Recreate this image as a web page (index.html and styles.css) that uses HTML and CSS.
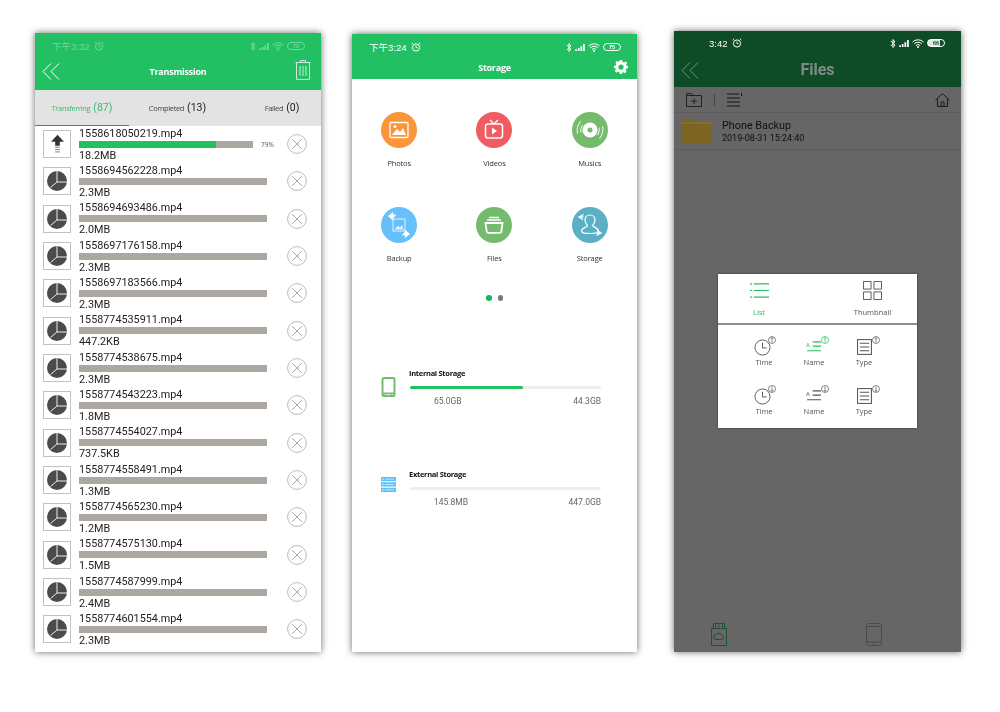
FILE: index.html
```html
<!DOCTYPE html>
<html lang="en">

<head>
	<meta charset="UTF-8">
	<meta name="viewport" content="width=device-width, initial-scale=1.0">
	<title>Storage app screens</title>
	<link rel="stylesheet" href="styles.css">
</head>

<body>
	<svg class="defs" xmlns="http://www.w3.org/2000/svg">
		<symbol id="i-back" viewBox="0 0 18 17"><path d="M9 .5 1 8.5l8 8M17 .5 9 8.5l8 8" fill="none" stroke="currentColor" stroke-width="1"/></symbol>
		<symbol id="i-alarm" viewBox="0 0 10 10"><circle cx="5" cy="5.5" r="3.6" fill="none" stroke="currentColor"/><path d="M5 3.5v2.2h1.6M.6 2.2 2.2.8M9.4 2.2 7.8.8" fill="none" stroke="currentColor" stroke-width=".9"/></symbol>
		<symbol id="i-bt" viewBox="0 0 6 11"><path d="M.8 3 4.800 7 3 9.500v-8L4.800 4 .8 8" fill="none" stroke="currentColor"/></symbol>
		<symbol id="i-signal" viewBox="0 0 11 8"><path d="M0 6h2v2H0zM3 4.500h2V8H3zM6 2.500h2V8H6zM9 0h2v8H9z" fill="currentColor"/></symbol>
		<symbol id="i-wifi" viewBox="0 0 12 9"><path d="M.5 3a8 8 0 0 1 11 0M2.200 4.800a5.500 5.500 0 0 1 7.600 0M3.900 6.500a3 3 0 0 1 4.200 0" fill="none" stroke="currentColor"/><circle cx="6" cy="8" r="1" fill="currentColor"/></symbol>
		<symbol id="i-pie" viewBox="0 0 20 20"><circle cx="10" cy="10" r="10" fill="#4b4b4b"/><path d="M10 0v11H20M10 11 3.500 16.500" fill="none" stroke="#fff" stroke-width=".9"/></symbol>
		<symbol id="i-up" viewBox="0 0 14 20"><path d="M7 0 14 7.500H9.500V12h-5V7.500H0z" fill="#333"/><path d="M4.500 13.500h5M4.500 16h5M4.500 18.500h5" stroke="#777" fill="none"/></symbol>
		<symbol id="i-close" viewBox="0 0 20 20"><circle cx="10" cy="10" r="9.400" fill="none" stroke="#a9a9a9" stroke-width=".8"/><path d="m5 5 10 10M15 5 5 15" stroke="#a9a9a9" fill="none"/></symbol>
		<symbol id="i-clock" viewBox="0 0 18 18"><circle cx="9" cy="9" r="8" fill="none" stroke="#555"/><path d="M9 4v5.500h4.500" fill="none" stroke="#555"/></symbol>
		<symbol id="i-type" viewBox="0 0 16 17"><rect x=".6" y=".6" width="14.800" height="15.800" fill="none" stroke="#555" stroke-width="1.100"/><path d="M3 4.500h10M3 8.500h10M3 12.500h10" stroke="#555" stroke-width="1.200"/></symbol>
		<symbol id="i-name" viewBox="0 0 18 14"><path d="M7 1h9M7 5.500h9M1 10.500h15" stroke="currentColor" stroke-width="1.200"/></symbol>
		<symbol id="i-sortup" viewBox="0 0 8 8"><circle cx="4" cy="4" r="3.500" fill="none" stroke="currentColor" stroke-width=".7"/><path d="M4 6.500v-5M2.800 2.800 4 1.500l1.200 1.300" fill="none" stroke="currentColor" stroke-width=".7"/></symbol>
		<symbol id="i-sortdown" viewBox="0 0 8 8"><circle cx="4" cy="4" r="3.500" fill="none" stroke="currentColor" stroke-width=".7"/><path d="M4 1.500v5M2.800 5.200 4 6.500l1.200-1.300" fill="none" stroke="currentColor" stroke-width=".7"/></symbol>
	</svg>

	<main class="board">
		<!-- transfer list -->
		<section class="phone phone-transfer">
			<header class="bar bar-tall">
				<div class="status status-faint">
					<span class="clock">下午3:32</span>
					<svg class="ic-alarm"><use href="#i-alarm"/></svg>
					<span class="status-right">
						<svg class="ic-bt"><use href="#i-bt"/></svg>
						<svg class="ic-signal"><use href="#i-signal"/></svg>
						<svg class="ic-wifi"><use href="#i-wifi"/></svg>
						<span class="battery">70</span>
					</span>
				</div>
				<div class="title-row">
					<svg class="ic-back"><use href="#i-back"/></svg>
					<h1 class="title">Transmission</h1>
					<svg class="ic-trash" viewBox="0 0 16 20"><path d="M5.500 2V.6h5V2M.6 2.500h14.800M1.500 2.500v16.900h13V2.500M5 6v10M8 6v10M11 6v10" fill="none" stroke="currentColor"/></svg>
				</div>
			</header>
			<nav class="tabs">
				<div class="tab tab-active">Transferring <b>(87)</b></div>
				<div class="tab">Completed <b>(13)</b></div>
				<div class="tab tab-last">Failed <b>(0)</b></div>
			</nav>
			<div class="list">
				<div class="row row-up">
					<div class="thumb"><svg class="ic-up"><use href="#i-up"/></svg></div>
					<div class="info">
						<div class="name">1558618050219.mp4</div>
						<div class="track-line">
							<div class="track track-short"><div class="fill fill-79"></div></div>
							<span class="pct">79%</span>
						</div>
						<div class="size">18.2MB</div>
					</div>
					<svg class="ic-close"><use href="#i-close"/></svg>
				</div>
				<div class="row">
					<div class="thumb"><svg class="ic-pie"><use href="#i-pie"/></svg></div>
					<div class="info"><div class="name">1558694562228.mp4</div><div class="track-line"><div class="track"></div></div><div class="size">2.3MB</div></div>
					<svg class="ic-close"><use href="#i-close"/></svg>
				</div>
				<div class="row">
					<div class="thumb"><svg class="ic-pie"><use href="#i-pie"/></svg></div>
					<div class="info"><div class="name">1558694693486.mp4</div><div class="track-line"><div class="track"></div></div><div class="size">2.0MB</div></div>
					<svg class="ic-close"><use href="#i-close"/></svg>
				</div>
				<div class="row">
					<div class="thumb"><svg class="ic-pie"><use href="#i-pie"/></svg></div>
					<div class="info"><div class="name">1558697176158.mp4</div><div class="track-line"><div class="track"></div></div><div class="size">2.3MB</div></div>
					<svg class="ic-close"><use href="#i-close"/></svg>
				</div>
				<div class="row">
					<div class="thumb"><svg class="ic-pie"><use href="#i-pie"/></svg></div>
					<div class="info"><div class="name">1558697183566.mp4</div><div class="track-line"><div class="track"></div></div><div class="size">2.3MB</div></div>
					<svg class="ic-close"><use href="#i-close"/></svg>
				</div>
				<div class="row">
					<div class="thumb"><svg class="ic-pie"><use href="#i-pie"/></svg></div>
					<div class="info"><div class="name">1558774535911.mp4</div><div class="track-line"><div class="track"></div></div><div class="size">447.2KB</div></div>
					<svg class="ic-close"><use href="#i-close"/></svg>
				</div>
				<div class="row">
					<div class="thumb"><svg class="ic-pie"><use href="#i-pie"/></svg></div>
					<div class="info"><div class="name">1558774538675.mp4</div><div class="track-line"><div class="track"></div></div><div class="size">2.3MB</div></div>
					<svg class="ic-close"><use href="#i-close"/></svg>
				</div>
				<div class="row">
					<div class="thumb"><svg class="ic-pie"><use href="#i-pie"/></svg></div>
					<div class="info"><div class="name">1558774543223.mp4</div><div class="track-line"><div class="track"></div></div><div class="size">1.8MB</div></div>
					<svg class="ic-close"><use href="#i-close"/></svg>
				</div>
				<div class="row">
					<div class="thumb"><svg class="ic-pie"><use href="#i-pie"/></svg></div>
					<div class="info"><div class="name">1558774554027.mp4</div><div class="track-line"><div class="track"></div></div><div class="size">737.5KB</div></div>
					<svg class="ic-close"><use href="#i-close"/></svg>
				</div>
				<div class="row">
					<div class="thumb"><svg class="ic-pie"><use href="#i-pie"/></svg></div>
					<div class="info"><div class="name">1558774558491.mp4</div><div class="track-line"><div class="track"></div></div><div class="size">1.3MB</div></div>
					<svg class="ic-close"><use href="#i-close"/></svg>
				</div>
				<div class="row">
					<div class="thumb"><svg class="ic-pie"><use href="#i-pie"/></svg></div>
					<div class="info"><div class="name">1558774565230.mp4</div><div class="track-line"><div class="track"></div></div><div class="size">1.2MB</div></div>
					<svg class="ic-close"><use href="#i-close"/></svg>
				</div>
				<div class="row">
					<div class="thumb"><svg class="ic-pie"><use href="#i-pie"/></svg></div>
					<div class="info"><div class="name">1558774575130.mp4</div><div class="track-line"><div class="track"></div></div><div class="size">1.5MB</div></div>
					<svg class="ic-close"><use href="#i-close"/></svg>
				</div>
				<div class="row">
					<div class="thumb"><svg class="ic-pie"><use href="#i-pie"/></svg></div>
					<div class="info"><div class="name">1558774587999.mp4</div><div class="track-line"><div class="track"></div></div><div class="size">2.4MB</div></div>
					<svg class="ic-close"><use href="#i-close"/></svg>
				</div>
				<div class="row">
					<div class="thumb"><svg class="ic-pie"><use href="#i-pie"/></svg></div>
					<div class="info"><div class="name">1558774601554.mp4</div><div class="track-line"><div class="track"></div></div><div class="size">2.3MB</div></div>
					<svg class="ic-close"><use href="#i-close"/></svg>
				</div>
			</div>
		</section>

		<!-- storage home -->
		<section class="phone phone-storage">
			<header class="bar bar-short">
				<div class="status">
					<span class="clock">下午3:24</span>
					<svg class="ic-alarm"><use href="#i-alarm"/></svg>
					<span class="status-right">
						<svg class="ic-bt"><use href="#i-bt"/></svg>
						<svg class="ic-signal"><use href="#i-signal"/></svg>
						<svg class="ic-wifi"><use href="#i-wifi"/></svg>
						<span class="battery">75</span>
					</span>
				</div>
				<div class="title-row">
					<h1 class="title">Storage</h1>
					<svg class="ic-gear" viewBox="0 0 24 24"><path fill="currentColor" fill-rule="evenodd" d="M10 0h4l.7 3.300 2.300 1 2.900-1.800 2.800 2.800-1.800 2.900 1 2.300L24 10v4l-3.100.7-1 2.300 1.800 2.900-2.800 2.800-2.900-1.800-2.300 1L14 24h-4l-.7-3.100-2.300-1-2.900 1.800-2.800-2.800L3.100 16l-1-2.300L0 14v-4l3.100-.7 1-2.300-1.800-2.900 2.800-2.800L7 3.100l2.300-1zM12 7.500a4.500 4.500 0 1 0 0 9 4.500 4.500 0 0 0 0-9z"/></svg>
				</div>
			</header>
			<div class="apps">
				<div class="app">
					<div class="app-icon c-orange">
						<svg viewBox="0 0 36 36"><rect x="9" y="10.500" width="18" height="15" rx="1" fill="none" stroke="#fff" stroke-width="1.300"/><path d="M11 23l5-6 3 3 3-4 3 7z" fill="#fff"/><circle cx="14" cy="14.500" r="1.500" fill="#fff"/></svg>
					</div>
					<div class="app-label">Photos</div>
				</div>
				<div class="app">
					<div class="app-icon c-red">
						<svg viewBox="0 0 36 36"><rect x="9.500" y="12" width="17" height="14" rx="2.500" fill="none" stroke="#fff" stroke-width="1.500"/><path d="M14 8l4 4 4-4" fill="none" stroke="#fff" stroke-width="1.300"/><path d="M16 15.500l5 3.500-5 3.500z" fill="#fff"/></svg>
					</div>
					<div class="app-label">Videos</div>
				</div>
				<div class="app">
					<div class="app-icon c-green">
						<svg viewBox="0 0 36 36"><circle cx="18" cy="18" r="7.500" fill="#fff"/><circle cx="18" cy="18" r="2.500" fill="#75bb6d"/><path d="M5.500 21.500c-1-4 0-8 3-12M9 20.500c-.6-2.500 0-5 1.500-7.500M30.500 14.500c1 4 0 8-3 12M27 15.500c.6 2.500 0 5-1.500 7.500" fill="none" stroke="#fff"/></svg>
					</div>
					<div class="app-label">Musics</div>
				</div>
				<div class="app">
					<div class="app-icon c-sky">
						<svg viewBox="0 0 36 36"><rect x="12" y="12" width="12" height="12" fill="none" stroke="#fff" stroke-opacity=".8"/><path d="M13.500 22.500l3.500-4 2 2 2-2.500 1.500 4.500z" fill="#fff" fill-opacity=".8"/><path d="M7 9l5-4 .5 3 3-.5-4 4.500 1 2zM29 27l-5 4-.5-3-3 .5 4-4.500-1-2z" fill="#fff"/></svg>
					</div>
					<div class="app-label">Backup</div>
				</div>
				<div class="app">
					<div class="app-icon c-green">
						<svg viewBox="0 0 36 36"><path d="M9.500 16h17l-1.200 8.500a1.500 1.500 0 0 1-1.500 1.300H12.200a1.500 1.500 0 0 1-1.500-1.300z" fill="none" stroke="#fff" stroke-width="1.800"/><path d="M11 13h14M13 10.500h10" stroke="#fff" stroke-width="1.400"/></svg>
					</div>
					<div class="app-label">Files</div>
				</div>
				<div class="app">
					<div class="app-icon c-teal">
						<svg viewBox="0 0 36 36"><path d="M18 8c3 0 5 2.300 5 5s-1.500 4.500-2.500 5.500c0 1.500 5.500 2 6 5.500 0 1.700-2 2.500-8.500 2.500S9.500 25.700 9.500 24c.5-3.500 6-4 6-5.500-1-1-2.500-2.800-2.500-5.500s2-5 5-5z" fill="none" stroke="#fff" stroke-width="1.200"/><path d="M11.500 7.500 7 10l4 2.500M7.500 10c1.500-.3 3-.3 4 0M24.500 28.500l4.500-2.500-4-2.500M28.500 26c-1.500.3-3 .3-4 0" fill="none" stroke="#fff" stroke-width="1.300"/></svg>
					</div>
					<div class="app-label">Storage</div>
				</div>
			</div>
			<div class="pager"><i class="dot dot-on"></i><i class="dot"></i></div>
			<div class="store store-in">
				<svg class="store-icon" viewBox="0 0 14 20"><rect x="1" y="1" width="12" height="18" rx="1.500" fill="none" stroke="#75bb6d" stroke-width="2"/><path d="M1 16.500h12" stroke="#75bb6d" stroke-width="2"/><circle cx="7" cy="17.500" r=".8" fill="#fff"/></svg>
				<div class="store-body">
					<div class="store-title">Internal Storage</div>
					<div class="store-track"><div class="store-fill"></div></div>
					<div class="store-vals"><span>65.0GB</span><span>44.3GB</span></div>
				</div>
			</div>
			<div class="store store-ex">
				<svg class="store-icon" viewBox="0 0 15 15"><path d="M0 0h15v4.300H0zM0 5.300h15v4.300H0zM0 10.700h15V15H0z" fill="#5fc0f5"/><path d="M4 2.100h9M4 7.500h9M4 12.800h9" stroke="#fff" stroke-width=".6"/><circle cx="2" cy="2.100" r=".7" fill="#fff"/><circle cx="2" cy="7.500" r=".7" fill="#fff"/><circle cx="2" cy="12.800" r=".7" fill="#fff"/></svg>
				<div class="store-body">
					<div class="store-title">External Storage</div>
					<div class="store-track"></div>
					<div class="store-vals"><span>145.8MB</span><span>447.0GB</span></div>
				</div>
			</div>
		</section>

		<!-- files with the view dialog open -->
		<section class="phone phone-files">
			<div class="status status-top">
				<span class="clock">3:42</span>
				<svg class="ic-alarm"><use href="#i-alarm"/></svg>
				<span class="status-right">
					<svg class="ic-bt"><use href="#i-bt"/></svg>
					<svg class="ic-signal"><use href="#i-signal"/></svg>
					<svg class="ic-wifi"><use href="#i-wifi"/></svg>
					<span class="battery battery-full">66</span>
				</span>
			</div>
			<header class="bar files-bar">
				<svg class="ic-back"><use href="#i-back"/></svg>
				<h1 class="files-title">Files</h1>
			</header>
			<div class="toolbar">
				<svg class="ic-tool" viewBox="0 0 16 14"><path d="M.5 13.500V.5h5l1.500 2h8.500v11zM.5 2.500H7M8 5.500v5.500M5.200 8.200h5.600" fill="none" stroke="#555"/></svg>
				<span class="tool-sep"></span>
				<svg class="ic-tool" viewBox="0 0 16 14"><path d="M0 1h12M0 5h13M0 9h13M0 13h13" stroke="#333" fill="none"/><path d="M14.500 0v3" stroke="#333"/></svg>
				<svg class="ic-home" viewBox="0 0 15 14"><path d="M.5 7 7.500.7l7 6.300M2.500 6v7.500h10V6M6 13.500V9h3v4.500" fill="none" stroke="#3c3c3c"/></svg>
			</div>
			<div class="file-row">
				<svg class="ic-folder" viewBox="0 0 30 24"><path d="M0 0h11l3 2.500h16V24H0z" fill="#7c6522"/><path d="M0 4h30" stroke="#8f7a3a"/></svg>
				<div>
					<div class="file-name">Phone Backup</div>
					<div class="file-date">2019-08-31 15:24:40</div>
				</div>
			</div>
			<div class="files-space"></div>
			<footer class="files-foot">
				<svg class="ic-foot ic-foot-sd" viewBox="0 0 16 23"><path d="M2.500 .5h11v4l2 1v17H.5v-17l2-1zM4.500 1.500v3M8 1.500v3M11.500 1.500v3M.5 5.500h15M5 16.500a2.500 2.500 0 0 1 .3-5 3.400 3.400 0 0 1 6 1.200 2 2 0 0 1 0 3.800z" fill="none" stroke="#49d07f"/></svg>
				<svg class="ic-foot ic-foot-ph" viewBox="0 0 16 23"><rect x=".5" y=".5" width="15" height="22" rx="2" fill="none" stroke="#bbb"/><path d="M.5 3.500h15M.5 19h15" stroke="#bbb"/><circle cx="8" cy="20.800" r="1" fill="none" stroke="#bbb" stroke-width=".7"/></svg>
			</footer>
			<div class="overlay"></div>
			<div class="dialog">
				<div class="views">
					<div class="view view-on">
						<svg class="ic-view" viewBox="0 0 20 16"><path d="M0 1h2M4 1h16M0 8h2M4 8h16M0 15h2M4 15h16" stroke="#22bf63" stroke-width="1.200" fill="none"/></svg>
						<div>List</div>
					</div>
					<div class="view">
						<svg class="ic-view" viewBox="0 0 20 20"><path d="M.5.5h8v8h-8zM11.500.5h8v8h-8zM.5 11.500h8v8h-8zM11.500 11.500h8v8h-8z" fill="none" stroke="#555"/></svg>
						<div>Thumbnail</div>
					</div>
				</div>
				<div class="sorts">
					<div class="sort"><div class="sort-ic"><svg class="s-clock"><use href="#i-clock"/></svg><svg class="s-arrow"><use href="#i-sortup"/></svg></div>Time</div>
					<div class="sort sort-on"><div class="sort-ic sort-ic-name"><span class="s-a">A</span><svg class="s-name"><use href="#i-name"/></svg><svg class="s-arrow"><use href="#i-sortup"/></svg></div>Name</div>
					<div class="sort"><div class="sort-ic sort-ic-type"><svg class="s-type"><use href="#i-type"/></svg><svg class="s-arrow"><use href="#i-sortup"/></svg></div>Type</div>
					<div class="sort"><div class="sort-ic"><svg class="s-clock"><use href="#i-clock"/></svg><svg class="s-arrow"><use href="#i-sortdown"/></svg></div>Time</div>
					<div class="sort"><div class="sort-ic sort-ic-name"><span class="s-a">A</span><svg class="s-name"><use href="#i-name"/></svg><svg class="s-arrow"><use href="#i-sortdown"/></svg></div>Name</div>
					<div class="sort"><div class="sort-ic sort-ic-type"><svg class="s-type"><use href="#i-type"/></svg><svg class="s-arrow"><use href="#i-sortdown"/></svg></div>Type</div>
				</div>
			</div>
		</section>
	</main>
</body>

</html>
```

FILE: styles.css
```css
* {
	box-sizing: border-box;
}

body {
	margin: 0;
	background: #fff;
	font-family: "Open Sans", sans-serif;
	color: #333;
}

h1 {
	margin: 0;
}

svg {
	display: block;
}

.defs {
	display: none;
}

.board {
	display: flex;
	align-items: flex-start;
	width: 1000px;
	height: 712px;
	padding-left: 35px;
	overflow: hidden;
}

.phone {
	position: relative;
	display: flex;
	flex-direction: column;
	background: #fff;
	box-shadow: 0 0 7px rgba(0, 0, 0, 0.6);
	overflow: hidden;
	filter: blur(0.3px);
}

.phone-transfer {
	width: 286px;
	height: 619px;
	margin-top: 33px;
}

.phone-storage {
	width: 285px;
	height: 618px;
	margin-top: 34px;
	margin-left: 31px;
}

.phone-files {
	width: 287px;
	height: 621px;
	margin-top: 31px;
	margin-left: 37px;
	background: #fff;
}

/* green header */
.bar {
	background: #22bf63;
	color: #fff;
	flex: none;
}

.bar-tall {
	height: 57px;
}

.bar-short {
	height: 45px;
}

.status {
	display: flex;
	align-items: center;
	gap: 4px;
	height: 26px;
	padding: 0 16px 0 17px;
	color: #fff;
	font-family: "Liberation Sans", "Noto Sans CJK SC", sans-serif;
	font-size: 9.5px;
}

.status-faint {
	color: #72d99b;
}

.status-right {
	display: flex;
	align-items: center;
	gap: 3px;
	margin-left: auto;
}

.ic-alarm {
	width: 10px;
	height: 10px;
}

.ic-bt {
	width: 6px;
	height: 11px;
}

.ic-signal {
	width: 10px;
	height: 7px;
}

.ic-wifi {
	width: 12px;
	height: 9px;
}

.battery {
	width: 18px;
	height: 8px;
	border: 1px solid currentColor;
	border-radius: 4px;
	font-size: 5.5px;
	line-height: 6px;
	text-align: center;
	font-weight: bold;
}

.battery-full {
	border-color: #fff;
	background: linear-gradient(90deg, #dfe9e3 72%, transparent 72%);
	color: #0e5430;
}

.title-row {
	position: relative;
	display: flex;
	align-items: center;
	justify-content: center;
	height: 25px;
}

.title {
	font-size: 9px;
	font-weight: 700;
	letter-spacing: -0.25px;
}

.ic-back {
	position: absolute;
	left: 7px;
	top: 4px;
	width: 18px;
	height: 17px;
	color: #fff;
}

.ic-trash {
	position: absolute;
	right: 10px;
	top: 1px;
	width: 16px;
	height: 20px;
	color: #c8f0d8;
}

.ic-gear {
	position: absolute;
	right: 9px;
	top: 0;
	width: 14px;
	height: 14px;
}

.phone-storage .title-row {
	height: 14px;
}

/* tabs */
.tabs {
	display: grid;
	grid-template-columns: 94px 1fr 1fr;
	flex: none;
	height: 36px;
	background: #e3e3e3;
	font-size: 7.5px;
	letter-spacing: -0.35px;
	color: #444;
}

.tab {
	display: flex;
	align-items: center;
	justify-content: center;
	gap: 3px;
	border-bottom: 1px solid transparent;
	margin-left: 1px;
}

.tab b {
	font-family: Roboto, sans-serif;
	font-weight: 400;
	font-size: 10.5px;
	letter-spacing: 0;
	color: #222;
}

.tab-active {
	color: #3fb873;
	border-bottom-color: #d9413a;
	margin-left: 0;
}

.tab-active b {
	color: #3fb873;
}

.tab-last {
	padding-left: 17px;
}

/* transfer rows */
.list {
	flex: 1;
	overflow: hidden;
	margin-top: -0.5px;
}

.row {
	display: flex;
	align-items: center;
	height: 37.33px;
	padding: 0 14px 0 8px;
}

.thumb {
	display: flex;
	align-items: center;
	justify-content: center;
	flex: none;
	width: 28px;
	height: 28px;
	border: 1px solid #c2c2c2;
}

.ic-pie {
	width: 20px;
	height: 20px;
}

.ic-up {
	width: 13px;
	height: 20px;
}

.info {
	flex: 1;
	padding-left: 8px;
	font-family: Roboto, sans-serif;
	font-size: 10.8px;
	color: #222;
}

.name,
.size {
	height: 13px;
	line-height: 13px;
}

.size {
	margin-top: 1px;
}

.track-line {
	display: flex;
	align-items: center;
	gap: 8px;
	height: 7px;
	margin-top: 1px;
}

.track {
	width: 188px;
	height: 7px;
	background: #aca8a1;
}

.track-short {
	width: 174px;
}

.fill {
	height: 100%;
	background: #22bf63;
}

.fill-79 {
	width: 79%;
}

.pct {
	font-family: "Open Sans", sans-serif;
	font-size: 6.5px;
	color: #555;
}

.ic-close {
	flex: none;
	width: 20px;
	height: 20px;
	margin-left: auto;
}

/* storage screen */
.apps {
	display: grid;
	grid-template-columns: repeat(3, 95.3px);
	grid-auto-rows: 95px;
	padding-top: 33px;
	margin-left: -0.5px;
}

.app {
	display: flex;
	flex-direction: column;
	align-items: center;
}

.app-icon {
	width: 36px;
	height: 36px;
	border-radius: 50%;
}

.app-label {
	margin-top: 9px;
	font-size: 7.5px;
	line-height: 12px;
	letter-spacing: -0.15px;
	color: #333;
}

.c-orange {
	background: #fc943a;
}

.c-red {
	background: #f25b62;
}

.c-green {
	background: #75bb6d;
}

.c-sky {
	background: #65c0fb;
}

.c-teal {
	background: #5bb0c6;
}

.pager {
	display: flex;
	justify-content: center;
	gap: 6px;
	margin-top: -7px;
}

.dot {
	width: 5.500px;
	height: 5.500px;
	border-radius: 50%;
	background: #77797c;
}

.dot-on {
	background: #14b85c;
}

.store {
	display: flex;
	align-items: flex-start;
	padding-left: 29px;
}

.store-in {
	margin-top: 66.5px;
}

.store-ex {
	margin-top: 61.5px;
}

.store-icon {
	flex: none;
	width: 15px;
}

.store-in .store-icon {
	height: 20px;
	margin-top: 10px;
}

.store-ex .store-icon {
	height: 15px;
	margin-top: 9px;
}

.store-body {
	width: 192px;
	margin-left: 13px;
}

.store-title {
	height: 14.5px;
	font-size: 7.5px;
	line-height: 13px;
	font-weight: 700;
	color: #111;
	letter-spacing: -0.3px;
}

.store-track {
	height: 3px;
	margin: 4px 0 0 1px;
	background: #eee;
	border-radius: 2px;
}

.store-fill {
	width: 59%;
	height: 100%;
	background: #22bf63;
	border-radius: 2px;
}

.store-vals {
	display: flex;
	justify-content: space-between;
	margin-top: 6px;
	padding-left: 25px;
	font-family: Roboto, sans-serif;
	font-size: 8.5px;
	line-height: 12px;
	color: #666;
}

/* files screen */
.status-top {
	position: relative;
	z-index: 3;
	flex: none;
	height: 24px;
	margin-bottom: -24px;
	padding: 0 16px 0 35px;
	font-size: 9.5px;
}

.files-bar {
	position: relative;
	height: 56px;
}

.files-bar .ic-back {
	top: 31px;
	z-index: 3;
	color: #6f9480;
}

.files-title {
	position: relative;
	z-index: 3;
	padding-top: 27px;
	font-family: Roboto, sans-serif;
	font-size: 16px;
	line-height: 24px;
	font-weight: 700;
	text-align: center;
	color: #7f8b85;
}

.toolbar {
	display: flex;
	align-items: center;
	flex: none;
	height: 26px;
	padding: 0 11px 0 12px;
	border-bottom: 1px solid #e6e6e6;
}

.ic-tool {
	width: 16px;
	height: 14px;
}

.tool-sep {
	width: 1px;
	height: 12px;
	margin: 0 12px;
	background: #aaa;
}

.ic-home {
	width: 15px;
	height: 14px;
	margin-left: auto;
}

.file-row {
	display: flex;
	align-items: center;
	flex: none;
	height: 37px;
	padding-left: 7px;
	border-bottom: 1px solid #e6e6e6;
	font-family: Roboto, sans-serif;
	color: #2a2a2a;
}

.ic-folder {
	position: relative;
	z-index: 3;
	width: 30px;
	height: 24px;
	margin-right: 11px;
}

.file-name {
	font-size: 10.8px;
	line-height: 13px;
}

.file-date {
	font-size: 9px;
	line-height: 12px;
}

.files-space {
	flex: 1;
}

.files-foot {
	display: flex;
	flex: none;
	height: 29px;
	padding-left: 37px;
}

.ic-foot {
	width: 16px;
	height: 23px;
}

.ic-foot-ph {
	margin-left: 139px;
}

.overlay {
	position: absolute;
	inset: 0;
	z-index: 2;
	background: rgba(0, 0, 0, 0.6);
}

.dialog {
	position: absolute;
	left: 44px;
	top: 243px;
	z-index: 3;
	width: 199px;
	height: 154px;
	background: #fff;
	box-shadow: 0 0 2px rgba(0, 0, 0, 0.5);
	color: #555;
	font-size: 7.5px;
}

.views {
	display: flex;
	height: 51px;
	border-bottom: 2px solid #8d8d8d;
}

.view {
	display: flex;
	flex-direction: column;
	align-items: center;
	width: 114px;
	line-height: 12px;
	padding-right: 32px;
}

.view + .view {
	width: 81px;
	padding-right: 0;
}

.ic-view {
	width: 19px;
	height: 19px;
	margin: 7px 0 6px;
}

.view-on {
	color: #22bf63;
}

.sorts {
	display: grid;
	grid-template-columns: repeat(3, 50px);
	grid-auto-rows: 49px;
	padding: 11px 0 0 21px;
}

.sort {
	display: flex;
	flex-direction: column;
	align-items: center;
	line-height: 12px;
}

.sort-on .sort-ic {
	color: #22bf63;
}

.sort-ic {
	position: relative;
	width: 24px;
	height: 20px;
	color: #555;
}

.sort-ic-name .s-arrow {
	right: -3px;
}

.sort-ic-type .s-arrow {
	right: -4px;
}

.s-clock {
	position: absolute;
	left: 2px;
	top: 3px;
	width: 17px;
	height: 17px;
}

.s-type {
	position: absolute;
	left: 5px;
	top: 3px;
	width: 15px;
	height: 16px;
}

.s-name {
	position: absolute;
	left: 4px;
	top: 5px;
	width: 17px;
	height: 13px;
}

.s-a {
	position: absolute;
	left: 4px;
	top: 5px;
	font-size: 6px;
	line-height: 8px;
}

.s-arrow {
	position: absolute;
	right: 0;
	top: 0;
	width: 8px;
	height: 8px;
}
```
